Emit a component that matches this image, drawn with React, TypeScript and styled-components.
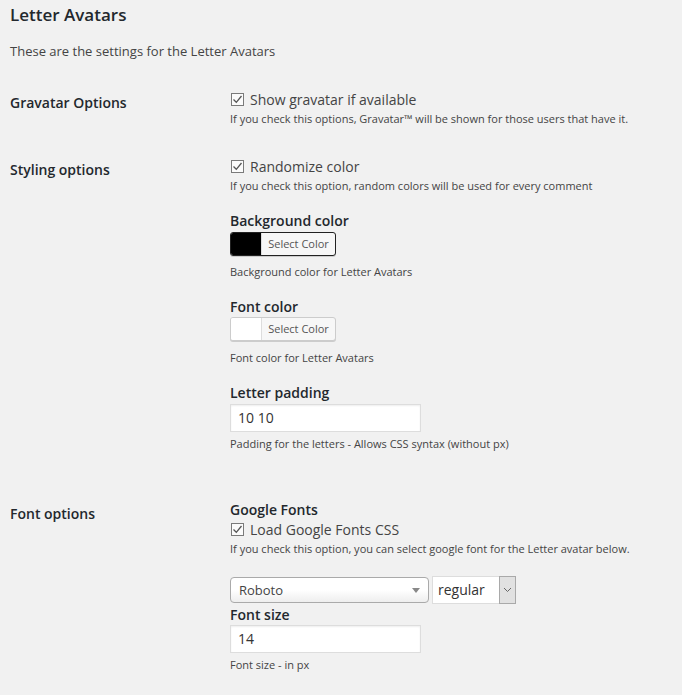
import React from "react";
import styled, { createGlobalStyle } from "styled-components";

const Global = createGlobalStyle`
  html, body { margin: 0; padding: 0; background: #f1f1f1; }
  body { font-family: "Open Sans", "Noto Sans", sans-serif; color: #444; }
  * { box-sizing: border-box; }
`;

const Wrap = styled.div`
  padding: 3px 10px 20px 10px;
`;

const Title = styled.h1`
  margin: 0;
  font-size: 17px;
  line-height: 24px;
  font-weight: 600;
  color: #23282d;
`;

const Intro = styled.p`
  margin: 14px 0 0 0;
  font-size: 13px;
  line-height: 20px;
  color: #444;
`;

const Row = styled.div<{ $gap: number }>`
  display: grid;
  grid-template-columns: 220px 1fr;
  margin-top: ${(p) => p.$gap}px;
`;

const RowLabel = styled.div`
  margin-top: 4px;
  font-size: 14px;
  line-height: 20px;
  font-weight: 600;
  color: #23282d;
`;

const Cell = styled.div`
  display: flex;
  flex-direction: column;
  align-items: flex-start;
`;

const CheckLine = styled.label`
  display: flex;
  align-items: center;
  gap: 6px;
  font-size: 14px;
  line-height: 21px;
  color: #444;
`;

const Box = styled.span`
  width: 13px;
  height: 13px;
  border: 1px solid #7a7a7a;
  background: #fbfbfb;
  display: inline-flex;
  align-items: center;
  justify-content: center;
  margin-left: 1px;
`;

const Desc = styled.p<{ $mt?: number }>`
  margin: ${(p) => p.$mt ?? 0}px 0 0 0;
  font-size: 11px;
  line-height: 18px;
  color: #444;
`;

const FieldHead = styled.div<{ $mt: number; $lh?: number }>`
  margin-top: ${(p) => p.$mt}px;
  font-size: 14px;
  line-height: ${(p) => p.$lh ?? 20}px;
  font-weight: 600;
  color: #23282d;
`;

const ColorButton = styled.div<{ $border: string; $mt: number }>`
  margin-top: ${(p) => p.$mt}px;
  display: flex;
  height: 24px;
  width: 106px;
  border: 1px solid ${(p) => p.$border};
  border-radius: 3px;
  overflow: hidden;
  background: #f7f7f7;
  box-shadow: 0 1px 0 #ccc;
`;

const Swatch = styled.span<{ $color: string }>`
  width: 30px;
  background: ${(p) => p.$color};
`;

const SelectLabel = styled.span`
  flex: 1;
  border-left: 1px solid #ddd;
  font-size: 11px;
  line-height: 22px;
  text-align: center;
  color: #555;
`;

const TextInput = styled.div<{ $mt: number }>`
  margin-top: ${(p) => p.$mt}px;
  width: 191px;
  height: 28px;
  background: #fff;
  border: 1px solid #ddd;
  box-shadow: inset 0 1px 2px rgba(0, 0, 0, 0.07);
  padding: 0 7px;
  font-size: 14px;
  line-height: 26px;
  color: #333;
`;

const SelectRow = styled.div`
  margin-top: 18px;
  display: flex;
  align-items: center;
  gap: 3px;
  height: 28px;
`;

const FontSelect = styled.div`
  width: 199px;
  height: 26px;
  border: 1px solid #aaa;
  border-radius: 4px;
  background: linear-gradient(#fff 0%, #fff 50%, #eee 100%);
  display: flex;
  align-items: center;
  justify-content: space-between;
  padding: 0 8px 0 8px;
  font-size: 13px;
  color: #444;
`;

const Tri = styled.span`
  width: 0;
  height: 0;
  border-left: 4px solid transparent;
  border-right: 4px solid transparent;
  border-top: 5px solid #888;
  margin-top: 1px;
`;

const VariantSelect = styled.div`
  width: 84px;
  height: 28px;
  background: #fff;
  border: 1px solid #ddd;
  display: flex;
  align-items: stretch;
  font-size: 14px;
  color: #333;
`;

const VariantText = styled.span`
  flex: 1;
  padding-left: 5px;
  line-height: 26px;
`;

const ArrowBox = styled.span`
  width: 17px;
  background: #e1e1e1;
  border: 1px solid #a9a9a9;
  margin: -1px -1px -1px 0;
  display: flex;
  align-items: center;
  justify-content: center;
`;

const Check = () => (
  <Box>
    <svg width="11" height="11" viewBox="0 0 11 11">
      <polyline points="1.5,5.5 4.3,8.3 9.5,2" fill="none" stroke="#555" strokeWidth="1.3" />
    </svg>
  </Box>
);

export default function App() {
  return (
    <Wrap>
      <Global />
      <Title>Letter Avatars</Title>
      <Intro>These are the settings for the Letter Avatars</Intro>

      <Row $gap={28}>
        <RowLabel>Gravatar Options</RowLabel>
        <Cell>
          <CheckLine>
            <Check />
            Show gravatar if available
          </CheckLine>
          <Desc>If you check this options, Gravatar™ will be shown for those users that have it.</Desc>
        </Cell>
      </Row>

      <Row $gap={28}>
        <RowLabel>Styling options</RowLabel>
        <Cell>
          <CheckLine>
            <Check />
            Randomize color
          </CheckLine>
          <Desc>If you check this option, random colors will be used for every comment</Desc>

          <FieldHead $mt={16}>Background color</FieldHead>
          <ColorButton $border="#222" $mt={1}>
            <Swatch $color="#000" />
            <SelectLabel>Select Color</SelectLabel>
          </ColorButton>
          <Desc $mt={7}>Background color for Letter Avatars</Desc>

          <FieldHead $mt={16}>Font color</FieldHead>
          <ColorButton $border="#ccc" $mt={0}>
            <Swatch $color="#fff" />
            <SelectLabel>Select Color</SelectLabel>
          </ColorButton>
          <Desc $mt={8}>Font color for Letter Avatars</Desc>

          <FieldHead $mt={16}>Letter padding</FieldHead>
          <TextInput $mt={1}>10 10</TextInput>
          <Desc $mt={3}>Padding for the letters - Allows CSS syntax (without px)</Desc>
        </Cell>
      </Row>

      <Row $gap={47}>
        <RowLabel>Font options</RowLabel>
        <Cell>
          <FieldHead $mt={0} $lh={19}>Google Fonts</FieldHead>
          <CheckLine>
            <Check />
            Load Google Fonts CSS
          </CheckLine>
          <Desc>If you check this option, you can select google font for the Letter avatar below.</Desc>
          <SelectRow>
            <FontSelect>
              <span>Roboto</span>
              <Tri />
            </FontSelect>
            <VariantSelect>
              <VariantText>regular</VariantText>
              <ArrowBox>
                <svg width="9" height="6" viewBox="0 0 9 6">
                  <polyline points="1,1 4.5,4.5 8,1" fill="none" stroke="#666" strokeWidth="1" />
                </svg>
              </ArrowBox>
            </VariantSelect>
          </SelectRow>
          <FieldHead $mt={1}>Font size</FieldHead>
          <TextInput $mt={0}>14</TextInput>
          <Desc $mt={3}>Font size - in px</Desc>
        </Cell>
      </Row>
    </Wrap>
  );
}
